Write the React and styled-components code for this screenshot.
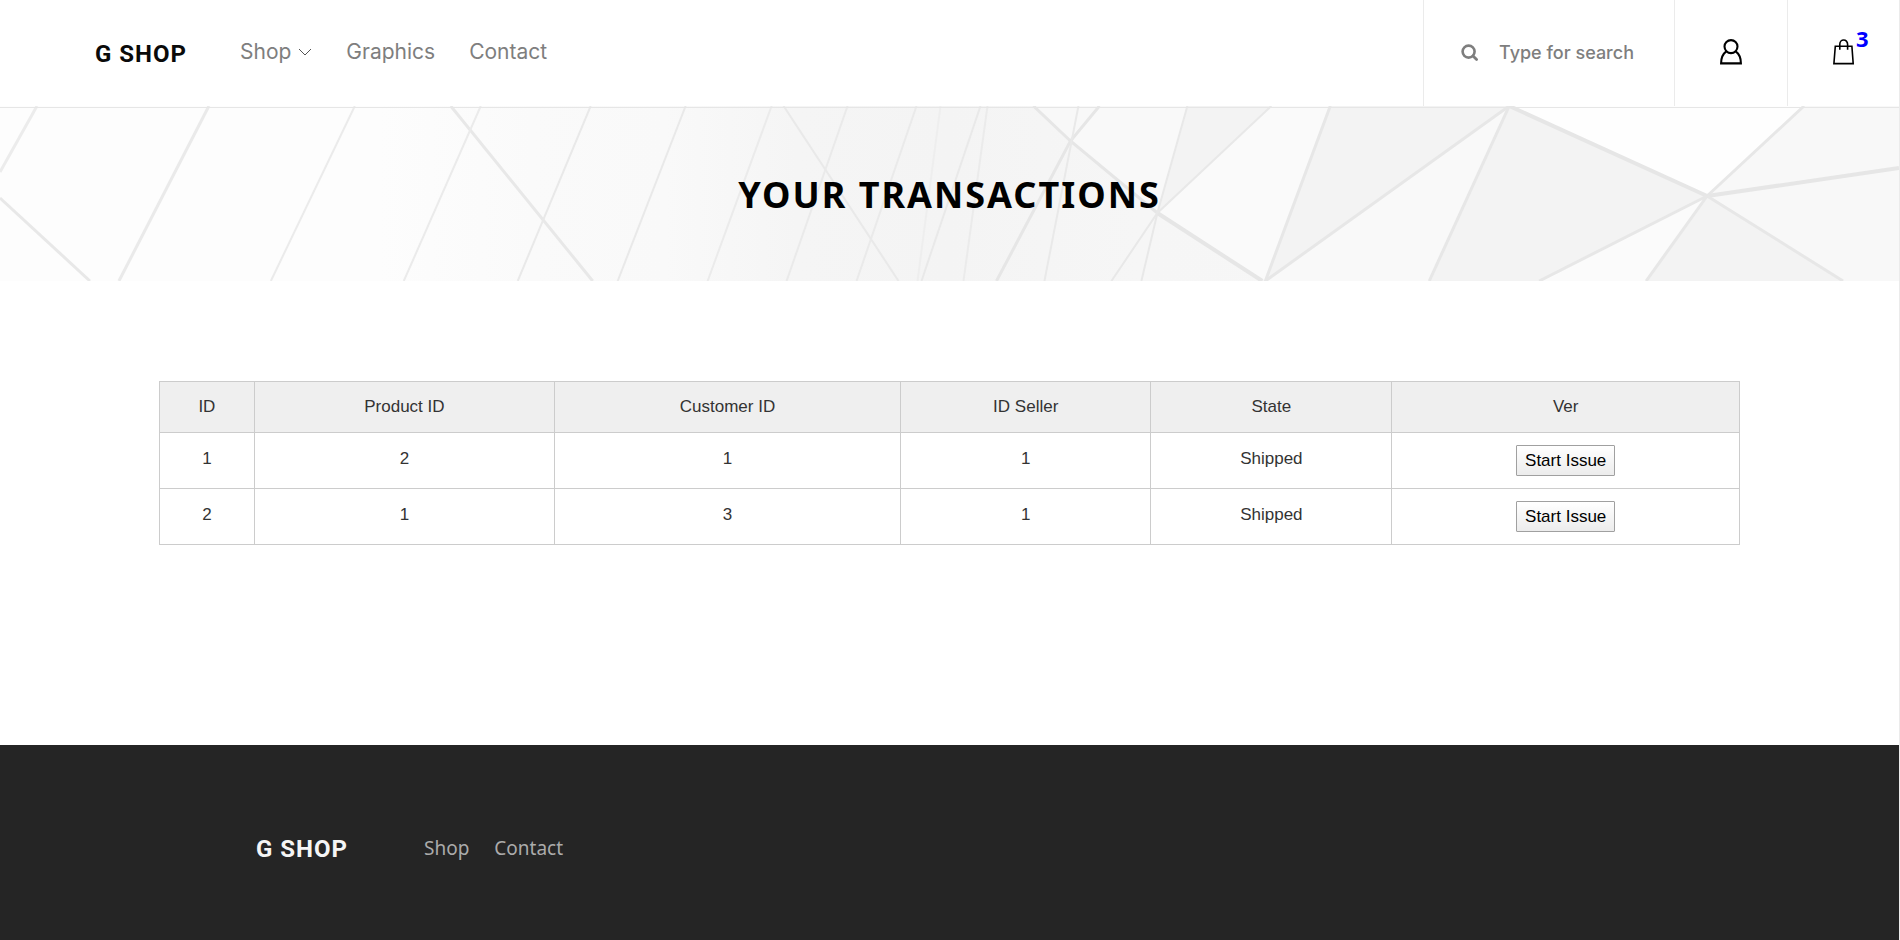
import React from "react";
import styled, { createGlobalStyle } from "styled-components";

const GlobalStyle = createGlobalStyle`
  *, *::before, *::after { box-sizing: border-box; }
  body { margin: 0; background: #fff; font-family: "Noto Sans", "Open Sans", sans-serif; }
  a { color: inherit; text-decoration: none; }
`;

const Page = styled.div`
  display: flex;
  flex-direction: column;
  min-height: 100vh;
  border-right: 1px solid #ebebeb;
`;

const Header = styled.header`
  display: flex;
  align-items: stretch;
  justify-content: space-between;
  height: 106px;
  padding-left: 95px;
`;

const HeaderLeft = styled.div`
  display: flex;
  align-items: center;
  gap: 49px;
`;

const Logo = styled.a`
  flex: none;
  width: 96px;
  padding-top: 2px;
  color: ${(p) => (p.$light ? "#f5f5f5" : "#0a0a0a")};
  font: bold 24px/28px Roboto, "Liberation Sans", sans-serif;
  letter-spacing: 1px;
  white-space: nowrap;
`;

const Nav = styled.nav`
  display: flex;
  align-items: center;
  gap: ${(p) => p.$gap}px;
  padding-bottom: ${(p) => p.$lift || 0}px;
  color: ${(p) => p.$color};
  font: ${(p) => p.$font};
`;

const NavLink = styled.a`
  display: flex;
  align-items: center;
  gap: 7px;
`;

const HeaderRight = styled.div`
  display: flex;
`;

const SearchBox = styled.label`
  display: flex;
  align-items: center;
  gap: 20px;
  width: 251px;
  padding-left: 37px;
  border-left: 1px solid #ebebeb;
`;

const SearchInput = styled.input`
  width: 150px;
  padding: 0;
  border: 0;
  outline: 0;
  background: transparent;
  color: #7e7e7e;
  font: 500 18px/28px Inter, sans-serif;
  &::placeholder { color: #7e7e7e; opacity: 1; }
`;

const IconCell = styled.a`
  position: relative;
  display: flex;
  align-items: center;
  justify-content: center;
  width: ${(p) => p.$width}px;
  padding-bottom: 3px;
  border-left: 1px solid #ebebeb;
`;

const CartCount = styled.span`
  position: absolute;
  left: 68px;
  top: 24px;
  color: #00f;
  font: bold 22px/28px "Noto Sans", sans-serif;
`;

const Banner = styled.section`
  position: relative;
  display: flex;
  align-items: center;
  justify-content: center;
  height: 175px;
  padding-top: 2px;
  background: #f8f8f8;
`;

const BannerArt = styled.svg`
  position: absolute;
  inset: 0;
  width: 100%;
  height: 100%;
`;

const Title = styled.h1`
  position: relative;
  margin: 0;
  color: #000;
  font: bold 36px/48px "Noto Sans", sans-serif;
  letter-spacing: 2px;
  text-transform: uppercase;
`;

const Main = styled.main`
  flex: 1;
  padding: 100px 159px 200px;
`;

const Table = styled.table`
  width: 100%;
  table-layout: fixed;
  border-collapse: collapse;
  color: #333;
  font: 17px/28px "Liberation Sans", Arial, sans-serif;
  text-align: center;
`;

const Column = styled.col`
  width: ${(p) => p.$share}%;
`;

const HeadCell = styled.th`
  height: 51px;
  padding: 0;
  border: 1px solid #ccc;
  background: #efefef;
  font-weight: normal;
`;

const Cell = styled.td`
  height: 56px;
  padding: 0 0 4px;
  border: 1px solid #ccc;
`;

const ActionCell = styled(Cell)`
  padding: 0;
`;

const IssueButton = styled.button`
  height: 31px;
  padding: 0 8px;
  border: 1px solid #a0a0a0;
  border-radius: 1px;
  background: linear-gradient(#fff, #ececec);
  color: #000;
  font: 17px/28px "Liberation Sans", Arial, sans-serif;
  vertical-align: middle;
`;

const Footer = styled.footer`
  display: flex;
  align-items: center;
  gap: 72px;
  height: 195px;
  padding: 10px 0 0 256px;
  background: #252525;
`;

const columns = [
  { name: "ID", share: 6 },
  { name: "Product ID", share: 19 },
  { name: "Customer ID", share: 21.9 },
  { name: "ID Seller", share: 15.85 },
  { name: "State", share: 15.25 },
  { name: "Ver", share: 22 },
];

const transactions = [
  { id: 1, product: 2, customer: 1, seller: 1, state: "Shipped" },
  { id: 2, product: 1, customer: 3, seller: 1, state: "Shipped" },
];

const facets = [
  ["1188,0 1272,0 1158,107", "#f3f3f3"],
  ["1272,0 1331,0 1266,175 1158,107", "#fafafa"],
  ["1034,0 1100,0 1071,35", "#f8f8f8"],
  ["1100,0 1188,0 1158,107 1071,35", "#f9f9f9"],
  ["1331,0 1510,0 1266,175", "#f3f3f3"],
  ["1510,0 1430,175 1266,175", "#f9f9f9"],
  ["1510,0 1708,90 1540,175 1430,175", "#f3f3f3"],
  ["1510,0 1805,0 1708,90", "#fefefe"],
  ["1708,90 1647,175 1540,175", "#fbfbfb"],
  ["1708,90 1844,175 1647,175", "#f3f3f3"],
  ["1805,0 1900,0 1900,175 1844,175 1708,90", "#f8f8f8"],
];

const seams = [
  ["37,0 0,66", 3, "#ececec"],
  ["0,92 90,175", 3, "#e8e8e8"],
  ["209,0 119,175", 3, "#eaeaea"],
  ["355,0 271,175", 2, "#ebebeb"],
  ["451,0 593,175", 3, "#e8e8e8"],
  ["481,0 404,175", 2, "#ebebeb"],
  ["591,0 518,175", 2, "#e9e9e9"],
  ["686,0 618,175", 2, "#e9e9e9"],
  ["772,0 708,175", 2, "#ebebeb"],
  ["784,0 899,175", 2, "#e9e9e9"],
  ["848,0 787,175", 2, "#eaeaea"],
  ["917,0 857,175", 2, "#eaeaea"],
  ["941,0 918,175", 2, "#eeeeee"],
  ["981,0 922,175", 2, "#e9e9e9"],
  ["988,0 964,175", 2, "#ebebeb"],
  ["1034,0 1071,35 1158,107", 3, "#e6e6e6"],
  ["1158,107 1263,175", 4, "#e6e6e6"],
  ["1100,0 1071,35 997,175", 3, "#e6e6e6"],
  ["1079,0 1045,175", 2, "#e9e9e9"],
  ["1188,0 1158,107 1142,175", 2, "#e8e8e8"],
  ["1272,0 1158,107 1112,175", 2, "#e8e8e8"],
  ["1331,0 1266,175 1510,0", 3, "#e7e7e7"],
  ["1510,0 1430,175", 3, "#e7e7e7"],
  ["1510,0 1708,90", 4, "#e6e6e6"],
  ["1708,90 1540,175", 3, "#e7e7e7"],
  ["1708,90 1647,175", 3, "#e7e7e7"],
  ["1708,90 1805,0", 3, "#e7e7e7"],
  ["1708,90 1900,62", 4, "#e6e6e6"],
  ["1708,90 1844,175", 3, "#e7e7e7"],
];

function BannerBackground() {
  return (
    <BannerArt viewBox="0 0 1900 175" preserveAspectRatio="none" aria-hidden="true">
      <defs>
        <linearGradient id="shade" gradientUnits="userSpaceOnUse" x1="0" y1="0" x2="1900" y2="0">
          <stop offset="0" stopColor="#fdfdfd" />
          <stop offset="0.2" stopColor="#fdfdfd" />
          <stop offset="0.28" stopColor="#fafafa" />
          <stop offset="0.35" stopColor="#f9f9f9" />
          <stop offset="0.42" stopColor="#f5f5f5" />
          <stop offset="0.5" stopColor="#f4f4f4" />
          <stop offset="0.6" stopColor="#f6f6f6" />
          <stop offset="1" stopColor="#f8f8f8" />
        </linearGradient>
      </defs>
      <rect width="1900" height="175" fill="url(#shade)" />
      {facets.map(([points, fill]) => (
        <polygon key={points} points={points} fill={fill} />
      ))}
      {seams.map(([points, width, stroke]) => (
        <polyline key={points} points={points} fill="none" stroke={stroke} strokeWidth={width} />
      ))}
      <rect y="1" width="1900" height="1" fill="#e6e6e6" />
    </BannerArt>
  );
}

const headerFont = "21px/28px Inter, sans-serif";
const footerFont = '19px/28px "Noto Sans", sans-serif';

export default function App() {
  return (
    <>
      <GlobalStyle />
      <Page>
        <Header>
          <HeaderLeft>
            <Logo href="#">G SHOP</Logo>
            <Nav $gap={34} $lift={2} $color="#7e7e7e" $font={headerFont} aria-label="Main">
              <NavLink href="#shop">
                Shop
                <svg width="14" height="8" viewBox="0 0 14 8" fill="none" stroke="#555" aria-hidden="true">
                  <path d="M1 1 L7 7 L13 1" />
                </svg>
              </NavLink>
              <NavLink href="#graphics">Graphics</NavLink>
              <NavLink href="#contact">Contact</NavLink>
            </Nav>
          </HeaderLeft>
          <HeaderRight>
            <SearchBox>
              <svg width="18" height="18" viewBox="0 0 18 18" fill="none" stroke="#7e7e7e" aria-hidden="true">
                <circle cx="7.6" cy="7.6" r="6" strokeWidth="2.6" />
                <path d="M12 12 L15.6 15.6" strokeWidth="2.8" strokeLinecap="round" />
              </svg>
              <SearchInput type="text" placeholder="Type for search" aria-label="Search" />
            </SearchBox>
            <IconCell href="#account" $width={113} aria-label="Account">
              <svg width="22" height="26" viewBox="0 0 22 26" fill="none" stroke="#000" strokeWidth="2.1" aria-hidden="true">
                <circle cx="11" cy="7.6" r="6.5" />
                <path d="M6.3 12.4 C3 14.8 1.1 18.8 1.1 24.4 H20.9 C20.9 18.8 19 14.8 15.7 12.4" />
              </svg>
            </IconCell>
            <IconCell href="#cart" $width={112} aria-label="Cart">
              <svg width="22" height="26" viewBox="0 0 22 26" fill="none" stroke="#000" strokeWidth="1.6" aria-hidden="true">
                <path d="M2.3 7.3 H18.9 L20.2 24.6 H0.9 Z" />
                <path d="M6.8 10.8 V5.3 C6.8 -0.4 14.6 -0.4 14.6 5.3 V10.8" />
              </svg>
              <CartCount>3</CartCount>
            </IconCell>
          </HeaderRight>
        </Header>
        <Banner>
          <BannerBackground />
          <Title>Your transactions</Title>
        </Banner>
        <Main>
          <Table>
            <colgroup>
              {columns.map((c) => (
                <Column key={c.name} $share={c.share} />
              ))}
            </colgroup>
            <thead>
              <tr>
                {columns.map((c) => (
                  <HeadCell key={c.name} scope="col">{c.name}</HeadCell>
                ))}
              </tr>
            </thead>
            <tbody>
              {transactions.map((t) => (
                <tr key={t.id}>
                  <Cell>{t.id}</Cell>
                  <Cell>{t.product}</Cell>
                  <Cell>{t.customer}</Cell>
                  <Cell>{t.seller}</Cell>
                  <Cell>{t.state}</Cell>
                  <ActionCell>
                    <IssueButton type="button">Start Issue</IssueButton>
                  </ActionCell>
                </tr>
              ))}
            </tbody>
          </Table>
        </Main>
        <Footer>
          <Logo href="#" $light>G SHOP</Logo>
          <Nav $gap={25} $color="#ababab" $font={footerFont} aria-label="Footer">
            <NavLink href="#shop">Shop</NavLink>
            <NavLink href="#contact">Contact</NavLink>
          </Nav>
        </Footer>
      </Page>
    </>
  );
}
